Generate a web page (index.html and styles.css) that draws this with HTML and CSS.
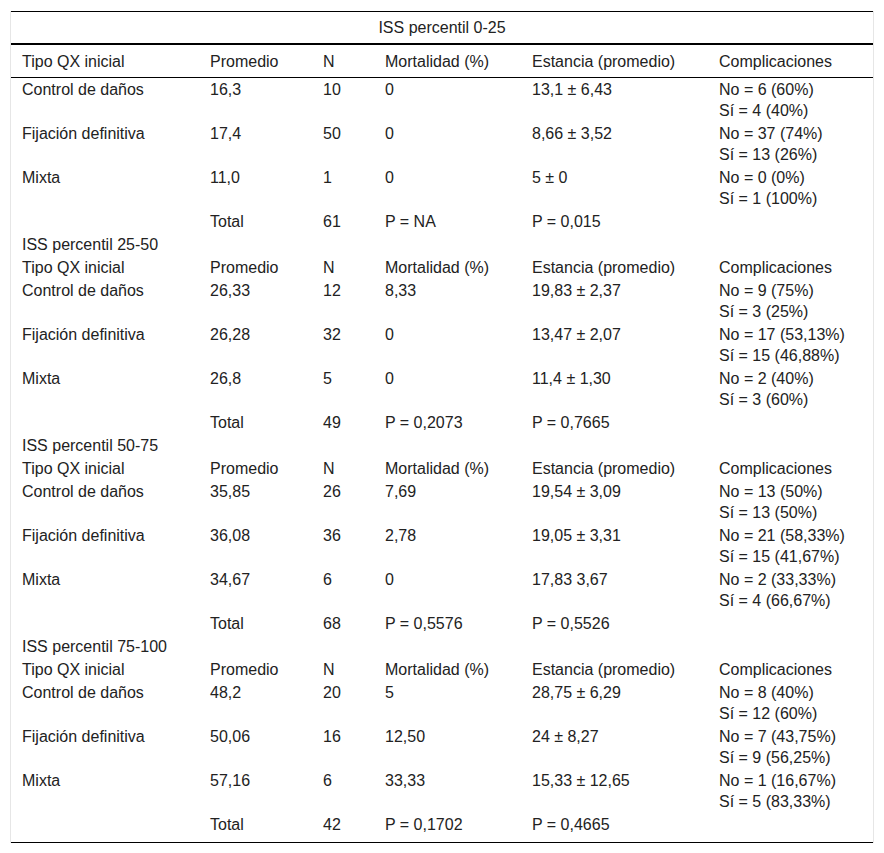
FILE: index.html
```html
<!DOCTYPE html>
<html lang="es">
<head>
<meta charset="utf-8">
<link rel="stylesheet" href="styles.css">
</head>
<body>
<div class="wrap">
<table class="t">
<colgroup>
<col class="c1"><col class="c2"><col class="c3"><col class="c4"><col class="c5"><col class="c6">
</colgroup>
<thead>
<tr class="cap"><th colspan="6">ISS percentil 0-25</th></tr>
<tr class="hd"><th>Tipo QX inicial</th><th>Promedio</th><th>N</th><th>Mortalidad (%)</th><th>Estancia (promedio)</th><th>Complicaciones</th></tr>
</thead>
<tbody>
<tr><td>Control de daños</td><td>16,3</td><td>10</td><td>0</td><td>13,1 ± 6,43</td><td>No = 6 (60%)<br>Sí = 4 (40%)</td></tr>
<tr><td>Fijación definitiva</td><td>17,4</td><td>50</td><td>0</td><td>8,66 ± 3,52</td><td>No = 37 (74%)<br>Sí = 13 (26%)</td></tr>
<tr><td>Mixta</td><td>11,0</td><td>1</td><td>0</td><td>5 ± 0</td><td>No = 0 (0%)<br>Sí = 1 (100%)</td></tr>
<tr><td></td><td>Total</td><td>61</td><td>P = NA</td><td>P = 0,015</td><td></td></tr>
<tr><td colspan="6">ISS percentil 25-50</td></tr>
<tr><td>Tipo QX inicial</td><td>Promedio</td><td>N</td><td>Mortalidad (%)</td><td>Estancia (promedio)</td><td>Complicaciones</td></tr>
<tr><td>Control de daños</td><td>26,33</td><td>12</td><td>8,33</td><td>19,83 ± 2,37</td><td>No = 9 (75%)<br>Sí = 3 (25%)</td></tr>
<tr><td>Fijación definitiva</td><td>26,28</td><td>32</td><td>0</td><td>13,47 ± 2,07</td><td>No = 17 (53,13%)<br>Sí = 15 (46,88%)</td></tr>
<tr><td>Mixta</td><td>26,8</td><td>5</td><td>0</td><td>11,4 ± 1,30</td><td>No = 2 (40%)<br>Sí = 3 (60%)</td></tr>
<tr><td></td><td>Total</td><td>49</td><td>P = 0,2073</td><td>P = 0,7665</td><td></td></tr>
<tr><td colspan="6">ISS percentil 50-75</td></tr>
<tr><td>Tipo QX inicial</td><td>Promedio</td><td>N</td><td>Mortalidad (%)</td><td>Estancia (promedio)</td><td>Complicaciones</td></tr>
<tr><td>Control de daños</td><td>35,85</td><td>26</td><td>7,69</td><td>19,54 ± 3,09</td><td>No = 13 (50%)<br>Sí = 13 (50%)</td></tr>
<tr><td>Fijación definitiva</td><td>36,08</td><td>36</td><td>2,78</td><td>19,05 ± 3,31</td><td>No = 21 (58,33%)<br>Sí = 15 (41,67%)</td></tr>
<tr><td>Mixta</td><td>34,67</td><td>6</td><td>0</td><td>17,83 3,67</td><td>No = 2 (33,33%)<br>Sí = 4 (66,67%)</td></tr>
<tr><td></td><td>Total</td><td>68</td><td>P = 0,5576</td><td>P = 0,5526</td><td></td></tr>
<tr><td colspan="6">ISS percentil 75-100</td></tr>
<tr><td>Tipo QX inicial</td><td>Promedio</td><td>N</td><td>Mortalidad (%)</td><td>Estancia (promedio)</td><td>Complicaciones</td></tr>
<tr><td>Control de daños</td><td>48,2</td><td>20</td><td>5</td><td>28,75 ± 6,29</td><td>No = 8 (40%)<br>Sí = 12 (60%)</td></tr>
<tr><td>Fijación definitiva</td><td>50,06</td><td>16</td><td>12,50</td><td>24 ± 8,27</td><td>No = 7 (43,75%)<br>Sí = 9 (56,25%)</td></tr>
<tr><td>Mixta</td><td>57,16</td><td>6</td><td>33,33</td><td>15,33 ± 12,65</td><td>No = 1 (16,67%)<br>Sí = 5 (83,33%)</td></tr>
<tr class="last"><td></td><td>Total</td><td>42</td><td>P = 0,1702</td><td>P = 0,4665</td><td></td></tr>
</tbody>
</table>
</div>
</body>
</html>
```
FILE: styles.css
```css
html, body {
  margin: 0;
  padding: 0;
  background: #fff;
}
body {
  font-family: "Liberation Sans", Arial, sans-serif;
  font-size: 16px;
  color: #222;
}
.wrap {
  margin: 11px 10px 0 10px;
  width: 862px;
  border-left: 1px solid #e6e6e6;
  border-right: 1px solid #e6e6e6;
}
.t {
  width: 862px;
  border-collapse: collapse;
  table-layout: fixed;
}
.c1 { width: 188px; }
.c2 { width: 113px; }
.c3 { width: 62px; }
.c4 { width: 147px; }
.c5 { width: 187px; }
.c6 { width: 165px; }
.t th, .t td {
  text-align: left;
  font-weight: normal;
  vertical-align: top;
  line-height: 21px;
  padding: 1px 11px;
  white-space: nowrap;
}
.t .cap th {
  text-align: center;
  border-top: 1px solid #000;
  border-bottom: 2px solid #000;
  padding: 5px 11px;
}
.t .hd th {
  border-bottom: 1px solid #000;
  padding: 6px 11px 5px;
}
.t .last td {
  padding-bottom: 7px;
  border-bottom: 1px solid #000;
}
```
